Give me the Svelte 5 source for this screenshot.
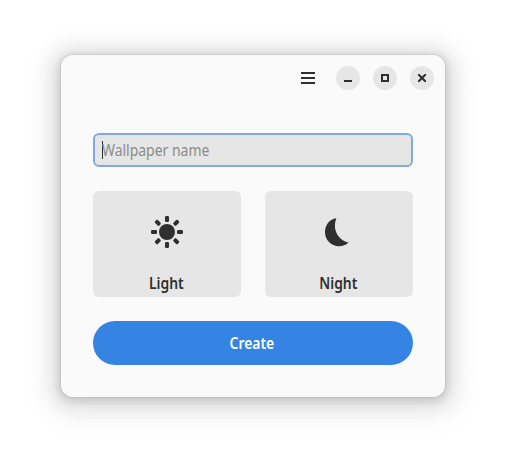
<script>
  let name = $state('');
</script>

<div class="desktop">
  <main class="window">
    <header>
      <button class="menu" aria-label="Menu">
        <svg width="14" height="12" viewBox="0 0 14 12"><path d="M0 0h14v2H0zM0 5h14v2H0zM0 10h14v2H0z" /></svg>
      </button>
      <button class="control" aria-label="Minimize">
        <svg width="16" height="16" viewBox="0 0 16 16"><path d="M4 10h8v2H4z" /></svg>
      </button>
      <button class="control" aria-label="Maximize">
        <svg width="16" height="16" viewBox="0 0 16 16"><path fill-rule="evenodd" d="M4 4h8v8H4zM6 6v4h4V6z" /></svg>
      </button>
      <button class="control" aria-label="Close">
        <svg width="16" height="16" viewBox="0 0 16 16"><path d="M4 4h1.500L8 6.500 10.500 4H12v1.500L9.500 8 12 10.500V12h-1.500L8 9.500 5.500 12H4v-1.500L6.500 8 4 5.500z" /></svg>
      </button>
    </header>
    <section class="content">
      <label class="entry">
        <span class="caret"></span>
        <input aria-label="Wallpaper name" placeholder="Wallpaper name" bind:value={name} />
      </label>
      <div class="cards">
        <button class="card">
          <svg width="32" height="32" viewBox="0 0 32 32">
            <circle cx="16" cy="16" r="8" />
            {#each [0, 45, 90, 135, 180, 225, 270, 315] as angle}
              <rect x="14" y="0" width="4" height="6" rx="1.200" transform="rotate({angle} 16 16)" />
            {/each}
          </svg>
          <span>Light</span>
        </button>
        <button class="card">
          <svg width="32" height="32" viewBox="0 0 32 32"><path d="M13.400 2.200C6.700 2.900 2 8.900 2 16c0 8 6 14.200 14 14.200 3.600 0 7.100-1.300 9.500-3.800C18 25 12.600 18.500 12 11.500c-.25-3.200.2-6.600 1.400-9.300z" /></svg>
          <span>Night</span>
        </button>
      </div>
      <button class="create"><span>Create</span></button>
    </section>
  </main>
</div>

<style>
  :global(body) { background: #fff; overflow: hidden; }
  .desktop { box-sizing: border-box; width: 506px; height: 464px; padding: 55px 61px 67px; }
  .window {
    width: 384px;
    height: 342px;
    border-radius: 12px;
    background: #fafafa;
    color: #2f2f2f;
    font-family: "Noto Sans", sans-serif;
    box-shadow: 0 2px 8px 2px rgba(0, 0, 0, .13), 0 3px 20px 10px rgba(0, 0, 0, .09),
      0 6px 32px 16px rgba(0, 0, 0, .04), 0 0 0 1px rgba(0, 0, 0, .05);
  }
  button { border: 0; padding: 0; margin: 0; font: inherit; color: inherit; background: none; }
  svg { display: block; fill: #2f2f2f; }
  header { display: flex; align-items: center; justify-content: flex-end; gap: 13px; height: 46px; padding-right: 11px; }
  .menu { margin-right: 8px; }
  .control { display: grid; place-items: center; width: 24px; height: 24px; border-radius: 50%; background: #e6e6e6; }
  .content { display: flex; flex-direction: column; gap: 24px; padding: 32px; }
  .entry {
    box-sizing: border-box;
    display: flex;
    align-items: center;
    height: 34px;
    border: 2px solid #80abe0;
    border-radius: 6px;
    background: #e6e6e6;
    padding-left: 7px;
  }
  .caret { width: 1px; height: 18px; background: #2f2f2f; margin-right: -1px; }
  input {
    flex: 1;
    min-width: 0;
    height: 28px;
    padding: 0;
    border: 0;
    outline: 0;
    background: transparent;
    font: 15.500px "Noto Sans", sans-serif;
    transform: translateY(-.5px) scaleX(.9);
    transform-origin: left;
  }
  input::placeholder { color: #8b8b8b; opacity: 1; }
  .cards { display: flex; gap: 24px; }
  .card {
    display: flex;
    flex-direction: column;
    align-items: center;
    gap: 24px;
    box-sizing: border-box;
    width: 148px;
    height: 106px;
    padding-top: 25px;
    border-radius: 6px;
    background: #e6e6e6;
  }
  .card span, .create span { display: inline-block; font-size: 15.500px; line-height: 22px; font-weight: 600; transform: translateY(-.5px) scaleX(.895); }
  .card span { margin-right: 1px; }
  .create span { margin-right: 2px; }
  .create { height: 44px; border-radius: 22px; background: #3584e4; color: #fff; }
</style>
